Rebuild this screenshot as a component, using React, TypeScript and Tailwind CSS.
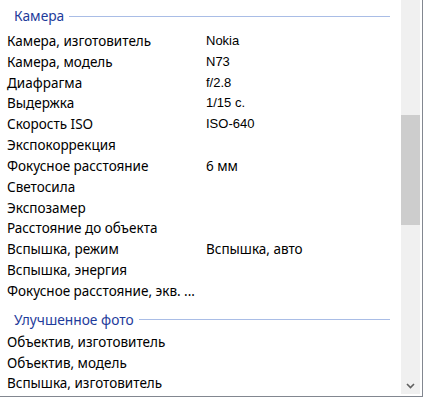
import React from "react";

type Row = { label: string; value?: string; latin?: boolean };

const cameraRows: Row[] = [
  { label: "Камера, изготовитель", value: "Nokia", latin: true },
  { label: "Камера, модель", value: "N73", latin: true },
  { label: "Диафрагма", value: "f/2.8", latin: true },
  { label: "Выдержка", value: "1/15 с.", latin: true },
  { label: "Скорость ISO", value: "ISO-640", latin: true },
  { label: "Экспокоррекция" },
  { label: "Фокусное расстояние", value: "6 мм" },
  { label: "Светосила" },
  { label: "Экспозамер" },
  { label: "Расстояние до объекта" },
  { label: "Вспышка, режим", value: "Вспышка, авто" },
  { label: "Вспышка, энергия" },
  { label: "Фокусное расстояние, экв. ..." },
];

const photoRows: Row[] = [
  { label: "Объектив, изготовитель" },
  { label: "Объектив, модель" },
  { label: "Вспышка, изготовитель" },
];

const GroupHeader = ({ title, top }: { title: string; top: string }) => (
  <div className={`h-[30px] ${top}`}>
    <div className="flex items-center h-[20px] pl-[14px] pr-[11px]">
      <span className="text-[13.75px] leading-[20px] text-[#1e3b9b] whitespace-nowrap">
        {title}
      </span>
      <div className="flex-1 h-px ml-[5px] bg-[#a9bde6]" />
    </div>
  </div>
);

const DetailRow = ({ row }: { row: Row }) => (
  <div className="flex h-[20.83px] items-center pl-[7px] text-[13.5px] leading-[20.83px] text-black whitespace-nowrap">
    <span className="w-[199px] shrink-0">{row.label}</span>
    {row.value && (
      <span
        className={
          row.latin
            ? "font-['Liberation_Sans',Arial,sans-serif] text-[13px]"
            : undefined
        }>
        {row.value}
      </span>
    )}
  </div>
);

const Scrollbar = () => (
  <div className="w-[19px] mr-[2px] mb-[2px] flex flex-col bg-[#f0f0f0]">
    <div className="h-[115px]" />
    <div className="h-[110px] bg-[#cdcdcd]" />
    <div className="flex-1" />
    <div className="h-[17px] flex items-center justify-center">
      <svg width="9" height="6" viewBox="0 0 9 6">
        <path d="M1 1 L4.5 4.5 L8 1" fill="none" stroke="#606060" strokeWidth="1.6" />
      </svg>
    </div>
  </div>
);

export default function App() {
  return (
    <div className="w-[432px] h-[409px] bg-white font-['Noto_Sans',sans-serif]">
      <div className="flex w-[423px] h-[397px] border-r border-b border-[#828790]">
        <div className="flex-1 overflow-hidden pt-px">
          <GroupHeader title="Камера" top="pt-[5px] h-[30.5px]" />
          {cameraRows.map((row) => (
            <DetailRow key={row.label} row={row} />
          ))}
          <GroupHeader title="Улучшенное фото" top="pt-[8px]" />
          {photoRows.map((row) => (
            <DetailRow key={row.label} row={row} />
          ))}
        </div>
        <Scrollbar />
      </div>
    </div>
  );
}
